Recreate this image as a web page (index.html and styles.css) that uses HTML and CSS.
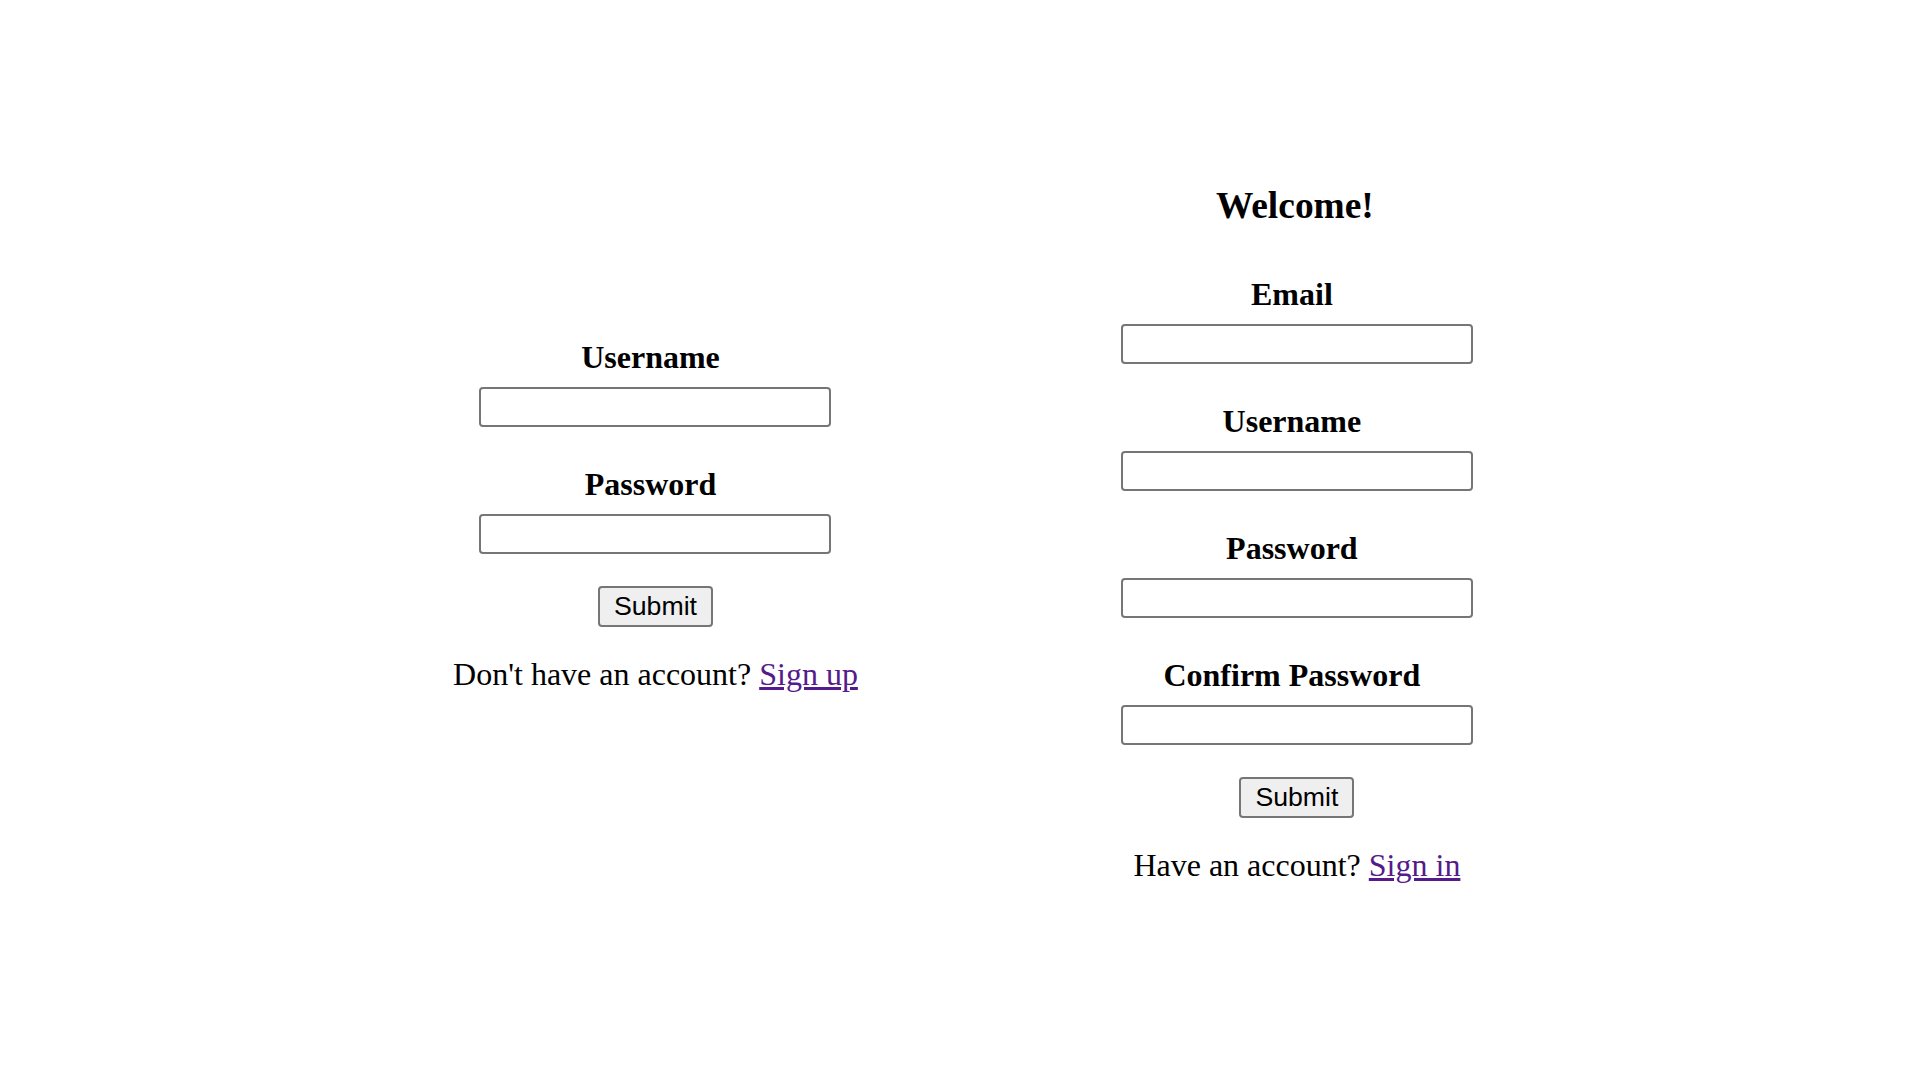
FILE: index.html
```html
<!DOCTYPE html>
<html lang="en">
<head>
<meta charset="utf-8">
<title>Sign in / Sign up</title>
<link rel="stylesheet" href="styles.css">
</head>
<body>
<main class="page">
  <form class="auth-form login-form">
    <div class="field">
      <label class="field-label" for="login-username">Username</label>
      <input class="field-input" id="login-username" type="text">
    </div>
    <div class="field">
      <label class="field-label" for="login-password">Password</label>
      <input class="field-input" id="login-password" type="password">
    </div>
    <button class="submit-btn" type="button">Submit</button>
    <p class="switch-text">Don't have an account? <a class="switch-link" href="#signup">Sign up</a></p>
  </form>

  <form class="auth-form signup-form">
    <h3 class="form-title">Welcome!</h3>
    <div class="field">
      <label class="field-label" for="su-email">Email</label>
      <input class="field-input" id="su-email" type="email">
    </div>
    <div class="field">
      <label class="field-label" for="su-username">Username</label>
      <input class="field-input" id="su-username" type="text">
    </div>
    <div class="field">
      <label class="field-label" for="su-password">Password</label>
      <input class="field-input" id="su-password" type="password">
    </div>
    <div class="field">
      <label class="field-label" for="su-confirm">Confirm Password</label>
      <input class="field-input" id="su-confirm" type="password">
    </div>
    <button class="submit-btn" type="button">Submit</button>
    <p class="switch-text">Have an account? <a class="switch-link" href="#signin">Sign in</a></p>
  </form>
</main>
</body>
</html>
```

FILE: styles.css
```css
* {
  box-sizing: border-box;
}

html, body {
  margin: 0;
  padding: 0;
  background: #ffffff;
}

body {
  font-family: "Liberation Serif", "Times New Roman", serif;
  color: #000000;
}

.page {
  height: 100vh;
  display: flex;
  justify-content: center;
  align-items: center;
  gap: 263px;
  padding-left: 6px;
  padding-bottom: 17px;
}

.auth-form {
  display: flex;
  flex-direction: column;
  align-items: center;
  margin: 0;
}

.signup-form {
  margin-bottom: 1px;
}

.form-title {
  font-size: 37.44px;
  font-weight: bold;
  line-height: 43px;
  margin: 37px 0 49px 0;
  padding-right: 4px;
}

.field {
  display: flex;
  flex-direction: column;
  align-items: center;
  margin-bottom: 39px;
}

.field:last-of-type {
  margin-bottom: 32px;
}

.field-label {
  font-size: 32px;
  font-weight: bold;
  line-height: 37px;
  padding-right: 10px;
}

.field-input {
  display: block;
  width: 352px;
  height: 40px;
  margin-top: 11px;
  border: 2px solid #767676;
  border-radius: 4px;
  background: #ffffff;
  font-family: "Liberation Sans", Arial, sans-serif;
  font-size: 26.67px;
  padding: 2px 4px;
}

.submit-btn {
  width: 115px;
  height: 41px;
  padding: 0;
  border: 2px solid #767676;
  border-radius: 4px;
  background: #efefef;
  color: #000000;
  font-family: "Liberation Sans", Arial, sans-serif;
  font-size: 26.67px;
  line-height: 1;
}

.switch-text {
  font-size: 32px;
  line-height: 37px;
  margin: 29px 0 32px 0;
  white-space: nowrap;
}

.switch-link {
  color: #551a8b;
  text-decoration: underline;
}
```
